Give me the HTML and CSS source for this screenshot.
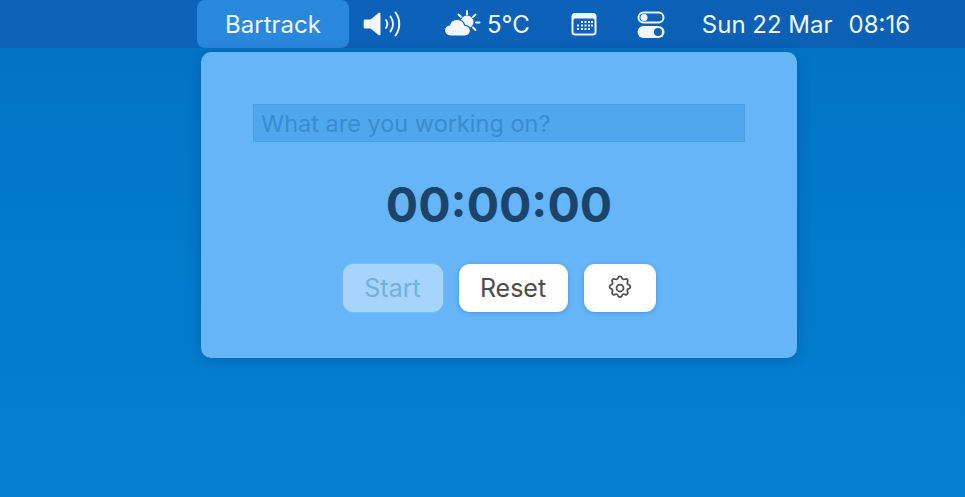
FILE: index.html
```html
<!DOCTYPE html>
<html lang="en">
<head>
<meta charset="utf-8">
<title>Bartrack</title>
<link rel="stylesheet" href="styles.css">
</head>
<body>
<div class="desktop">
  <header class="menubar">
    <div class="bar-app">Bartrack</div>
    <svg class="ic-sound" width="42" height="30" viewBox="0 0 42 30" fill="none">
      <path d="M2 10.5h5.5L15.5 4c1-.7 2-.2 2 1v20c0 1.200-1 1.700-2 1l-8-6.500H2c-.8 0-1.300-.5-1.300-1.300v-6.400c0-.8.5-1.300 1.300-1.300z" fill="#f2f7fc"/>
      <path d="M23 11c1.700 2.500 1.700 5.500 0 8M27.500 7.500c3.200 4.500 3.200 10.500 0 15M32.500 3.500c5 6.800 5 16.200 0 23" stroke="#f2f7fc" stroke-width="2" stroke-linecap="round"/>
    </svg>
    <div class="weather">
      <svg class="ic-weather" width="40" height="30" viewBox="0 0 40 30" fill="none">
        <g stroke="#f2f7fc" stroke-width="2" stroke-linecap="round">
          <path d="M23 2v3.500M31.500 5.500l-2.500 2.500M35.500 13.500h-3.500M31.500 21l-2.500-2.500M14.500 5.500l2.300 2.300"/>
        </g>
        <circle cx="23" cy="13" r="6.500" fill="#f2f7fc"/>
        <path d="M6.500 27C3 27 .5 24.500 .5 21.500c0-3 2.300-5.300 5-5.500 1-3.300 4-5.500 7.500-5.500 3.800 0 6.800 2.500 7.800 5.800 3-.1 5.700 2.200 5.700 5.200 0 3-2.400 5.500-5.500 5.500z" fill="#f2f7fc" stroke="#0c60b8" stroke-width="1.200"/>
      </svg>
      <span>5°C</span>
    </div>
    <svg class="ic-cal" width="26" height="24" viewBox="0 0 26 24" fill="none">
      <rect x="0.500" y="1" width="25" height="22.500" rx="3.500" fill="#f2f7fc"/>
      <rect x="2.500" y="6.500" width="21" height="15" rx="1.500" fill="#0e62ba"/>
      <g fill="#f2f7fc">
        <rect x="10" y="9" width="2" height="2"/><rect x="13.500" y="9" width="2" height="2"/><rect x="17" y="9" width="2" height="2"/><rect x="20" y="9" width="2" height="2"/>
        <rect x="6" y="12.500" width="2" height="2"/><rect x="10" y="12.500" width="2" height="2"/><rect x="13.500" y="12.500" width="2" height="2"/><rect x="17" y="12.500" width="2" height="2"/><rect x="20" y="12.500" width="2" height="2"/>
        <rect x="6" y="16" width="2" height="2"/><rect x="10" y="16" width="2" height="2"/><rect x="13.500" y="16" width="2" height="2"/><rect x="17" y="16" width="2" height="2"/>
      </g>
    </svg>
    <svg class="ic-toggle" width="28" height="27" viewBox="0 0 28 27" fill="none">
      <rect x="1.500" y="1.500" width="25" height="10" rx="5" stroke="#f2f7fc" stroke-width="2"/>
      <circle cx="7" cy="6.500" r="3.500" fill="#f2f7fc"/>
      <rect x="0.500" y="15" width="27" height="12" rx="6" fill="#f2f7fc"/>
      <circle cx="21" cy="21" r="4" fill="#0e62ba"/>
    </svg>
    <div class="clock"><span>Sun 22 Mar</span><span>08:16</span></div>
  </header>

  <section class="panel">
    <div class="task-field">What are you working on?</div>
    <div class="timer">00:00:00</div>
    <div class="actions">
      <button class="btn btn-start" type="button">Start</button>
      <button class="btn btn-reset" type="button">Reset</button>
      <button class="btn btn-gear" type="button" aria-label="Settings">
        <svg width="28" height="28" viewBox="0 0 24 24" fill="none" stroke="#4d4d4d" stroke-width="1.500" stroke-linecap="round" stroke-linejoin="round">
          <path d="M10.300 3.300c.4-1.700 2.900-1.700 3.300 0a1.700 1.700 0 0 0 2.600 1.100c1.500-.9 3.200.8 2.300 2.300a1.700 1.700 0 0 0 1.100 2.600c1.700.4 1.700 2.900 0 3.300a1.700 1.700 0 0 0-1.100 2.600c.9 1.500-.8 3.200-2.300 2.300a1.700 1.700 0 0 0-2.600 1.100c-.4 1.700-2.900 1.700-3.300 0a1.700 1.700 0 0 0-2.600-1.100c-1.500.9-3.200-.8-2.300-2.300a1.700 1.700 0 0 0-1.100-2.600c-1.700-.4-1.700-2.900 0-3.300a1.700 1.700 0 0 0 1.100-2.600c-.9-1.500.8-3.200 2.300-2.300a1.700 1.700 0 0 0 2.600-1.100z"/>
          <circle cx="12" cy="12" r="3"/>
        </svg>
      </button>
    </div>
  </section>
</div>
</body>
</html>
```
FILE: styles.css
```css
* { box-sizing: border-box; }
html, body { margin: 0; height: 100%; overflow: hidden; }
body { font-family: Inter, "Liberation Sans", sans-serif; }

.desktop {
  position: relative;
  width: 965px;
  height: 497px;
  background: linear-gradient(180deg, #0274c6 48px, #0480d2 100%);
}

.menubar {
  height: 48px;
  display: flex;
  align-items: center;
  padding-left: 197px;
  background: linear-gradient(90deg, #0c63b8, #0b60b6);
  color: #f2f7fc;
  font-size: 24px;
}
.bar-app {
  width: 152px;
  height: 48px;
  display: flex;
  align-items: center;
  justify-content: center;
  background: #2a88dc;
  border-radius: 8px;
}
.ic-sound { margin-left: 14px; }
.weather { margin-left: 39px; display: flex; align-items: center; gap: 3px; }
.ic-cal { margin-left: 41px; }
.ic-toggle { margin-left: 40px; }
.clock { margin-left: 37px; display: flex; gap: 16px; white-space: nowrap; }

.panel {
  position: absolute;
  left: 201px;
  top: 52px;
  width: 596px;
  height: 306px;
  padding: 52px 52px 0;
  display: flex;
  flex-direction: column;
  align-items: center;
  background: #66b5f8;
  border-radius: 10px;
  box-shadow: 0 2px 14px rgba(0, 50, 110, 0.3);
}
.task-field {
  width: 492px;
  height: 38px;
  padding-left: 7px;
  display: flex;
  align-items: center;
  background: #50a7ec;
  border: 1px solid #4a9fe2;
  color: #3a8ccf;
  font-size: 23.500px;
}
.timer {
  margin-top: 34px;
  color: #1a4469;
  font-size: 48px;
  line-height: 58px;
  font-weight: 700;
}
.actions {
  margin-top: 30px;
  display: flex;
  gap: 16px;
}
.btn {
  height: 48px;
  border: 0;
  border-radius: 11px;
  background: #fff;
  color: #4d4d4d;
  font: 400 25px Inter, "Liberation Sans", sans-serif;
  display: flex;
  align-items: center;
  justify-content: center;
  padding: 0;
  box-shadow: 0 1px 4px rgba(0, 50, 110, 0.25);
}
.btn-start { width: 100px; background: #a6d4fd; color: #79aed9; box-shadow: 0 0 2px rgba(255, 255, 255, 0.4); }
.btn-reset { width: 109px; }
.btn-gear { width: 72px; }
```
